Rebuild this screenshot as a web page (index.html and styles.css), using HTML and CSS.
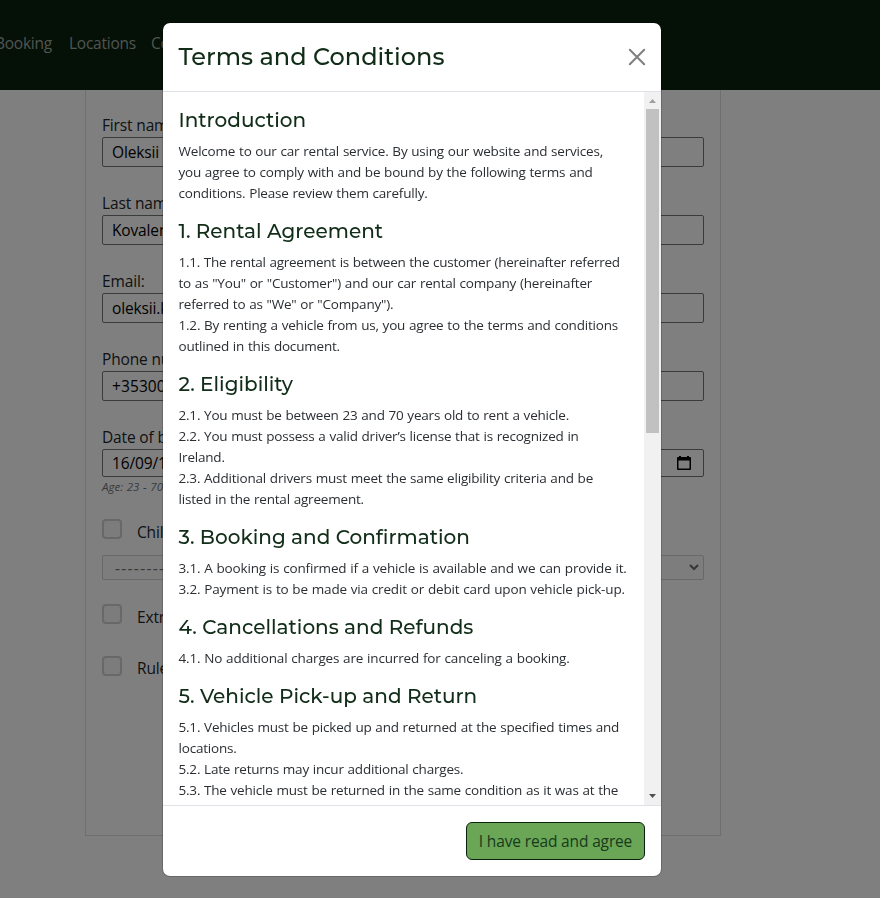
FILE: index.html
```html
<!DOCTYPE html>
<html lang="en">
<head>
<meta charset="utf-8">
<title>Terms and Conditions</title>
<link rel="stylesheet" href="styles.css">
</head>
<body>
<header class="navbar"><nav><a class="n1">Booking</a><a class="n2">Locations</a><a>Contact</a></nav></header>
<main class="card">
  <div class="field"><label>First name:</label><div class="input">Oleksii</div></div>
  <div class="field"><label>Last name:</label><div class="input">Kovalenko</div></div>
  <div class="field"><label>Email:</label><div class="input">oleksii.k</div></div>
  <div class="field"><label>Phone number:</label><div class="input phone">+35300</div></div>
  <div class="field date"><label>Date of birth:</label>
    <div class="input">16/09/1990<svg class="cal" width="14" height="16" viewBox="0 0 14 16"><path fill-rule="evenodd" d="M2 1h2v1h6V1h2v1h1q1 0 1 1v11q0 1-1 1H1q-1 0-1-1V3q0-1 1-1h1zM1.500 5.500v8h11v-8z"/></svg></div>
    <small>Age: 23 - 70</small></div>
  <div class="check c1"><i></i><span>Child seat</span></div>
  <div class="select"><span>---------</span><svg width="10" height="7" viewBox="0 0 10 7"><path d="M1 1l4 4 4-4" fill="none" stroke="#707070" stroke-width="2.2"/></svg></div>
  <div class="check c2"><i></i><span>Extra driver</span></div>
  <div class="check c3"><i></i><span>Rules</span></div>
</main>
<div class="backdrop">
  <section class="modal">
    <div class="modal-header"><h4>Terms and Conditions</h4>
      <svg class="close" width="18" height="18" viewBox="0 0 18 18"><path d="M1.800 1.800l14.400 14.400M16.200 1.800l-14.400 14.400" stroke="#7f7f7f" stroke-width="2" stroke-linecap="round"/></svg></div>
    <div class="modal-body">
      <div class="terms">
        <h5>Introduction</h5>
        <p>Welcome to our car rental service. By using our website and services,<br>you agree to comply with and be bound by the following terms and<br>conditions. Please review them carefully.</p>
        <h5>1. Rental Agreement</h5>
        <p><span class="tight">1.1. The rental agreement is between the customer (hereinafter referred</span><br>to as "You" or "Customer") and our car rental company (hereinafter<br>referred to as "We" or "Company").<br>1.2. By renting a vehicle from us, you agree to the terms and conditions<br>outlined in this document.</p>
        <h5>2. Eligibility</h5>
        <p>2.1. You must be between 23 and 70 years old to rent a vehicle.<br>2.2. You must possess a valid driver’s license that is recognized in<br>Ireland.<br>2.3. Additional drivers must meet the same eligibility criteria and be<br>listed in the rental agreement.</p>
        <h5>3. Booking and Confirmation</h5>
        <p class="loose">3.1. A booking is confirmed if a vehicle is available and we can provide it.<br>3.2. Payment is to be made via credit or debit card upon vehicle pick-up.</p>
        <h5>4. Cancellations and Refunds</h5>
        <p class="loose">4.1. No additional charges are incurred for canceling a booking.</p>
        <h5>5. Vehicle Pick-up and Return</h5>
        <p>5.1. Vehicles must be picked up and returned at the specified times and<br>locations.<br>5.2. Late returns may incur additional charges.<br>5.3. The vehicle must be returned in the same condition as it was at the</p>
      </div>
      <div class="scrollbar"><svg width="17" height="17" viewBox="0 0 17 17"><path d="M5 11h7L8.500 7z" fill="#a0a0a0"/></svg><div class="thumb"></div><svg class="down" width="17" height="17" viewBox="0 0 17 17"><path d="M5 6h7L8.500 10z" fill="#505050"/></svg></div>
    </div>
    <div class="modal-footer"><button>I have read and agree</button></div>
  </section>
</div>
</body>
</html>
```
FILE: styles.css
```css
* { box-sizing: border-box; }
body { margin: 0; height: 898px; overflow: hidden; background: #fff; color: #212529; font: 15.5px/24px "Open Sans", "Noto Sans", sans-serif; letter-spacing: -.15px; }
.navbar { height: 90px; background: #0a200e; padding-top: 31px; color: #a0aaa2; letter-spacing: -.25px; white-space: nowrap; }
.navbar nav { display: flex; margin-left: -5px; }
.n1 { width: 74px; }
.n2 { width: 82px; }
.card { width: 636px; height: 746px; margin-left: 85px; padding: 23px 16px 0; border: 1px solid #dedede; border-top: 0; }
.field { height: 78px; white-space: nowrap; }
.field label { display: block; height: 24px; line-height: 24px; }
.input { height: 30px; border: 1px solid #767676; border-radius: 2px; padding: 0 9px; line-height: 29px; color: #000; display: flex; justify-content: space-between; align-items: center; }
.phone { letter-spacing: .1px; }
.date .input { height: 28px; padding-right: 12px; }
.date small { display: block; font-size: 11.5px; font-style: italic; line-height: 20px; color: #6c757d; letter-spacing: 0; word-spacing: .7px; }
.cal { margin-top: 0; }
.check { display: flex; }
.check i { width: 20px; height: 20px; border: 2px solid #d0d0d0; border-radius: 4px; background: #f8f8f8; }
.check span { margin-left: 15px; line-height: 27px; white-space: nowrap; }
.c1 { height: 36px; margin-top: 16px; }
.c2 { height: 52px; margin-top: 24px; }
.c3 span { line-height: 25px; }
.select { height: 25px; border: 1px solid #d0d0d0; border-radius: 2px; background: #fafafa; display: flex; align-items: center; justify-content: space-between; padding: 0 4px 0 12px; color: #707070; letter-spacing: 1.3px; }
.backdrop { position: fixed; inset: 0; background: rgba(0,0,0,.5); padding: 22px 0 0 162px; }
.modal { width: 500px; height: 855px; background: #fff; background-clip: padding-box; border: 1px solid rgba(0,0,0,.175); border-radius: 8px; overflow: hidden; }
.modal-header { height: 69px; border-bottom: 1px solid #dee2e6; display: flex; align-items: center; justify-content: space-between; padding: 0 15px 0 15.5px; }
h4, h5 { font-family: Montserrat, Inter, sans-serif; font-weight: 500; margin: 0; color: #112d18; letter-spacing: 0; white-space: nowrap; }
h4 { font-size: 24px; line-height: 36px; }
h5 { font-size: 20px; line-height: 24px; margin-bottom: 9px; }
.modal-body { height: 713px; display: flex; overflow: hidden; }
.terms { flex: 1; padding: 16px 0 0 15.5px; min-width: 0; }
p { margin: 0 0 15px; font-size: 13.5px; line-height: 21px; white-space: nowrap; letter-spacing: -.2px; word-spacing: .5px; color: #2b2f33; }
.tight { letter-spacing: -.25px; }
.loose { letter-spacing: -.16px; }
.scrollbar { width: 17px; flex: none; background: #f1f1f1; display: flex; flex-direction: column; }
.thumb { width: 13px; height: 324px; margin-left: 2px; background: #c1c1c1; }
.down { margin-top: auto; }
.modal-footer { height: 71px; border-top: 1px solid #dee2e6; padding: 16px 16px; display: flex; justify-content: flex-end; }
button { width: 179px; height: 38px; border: 1px solid #0a200e; border-radius: 6px; background: #6aa656; color: #173a1c; font: inherit; letter-spacing: -.15px; padding: 0; white-space: nowrap; }
```
